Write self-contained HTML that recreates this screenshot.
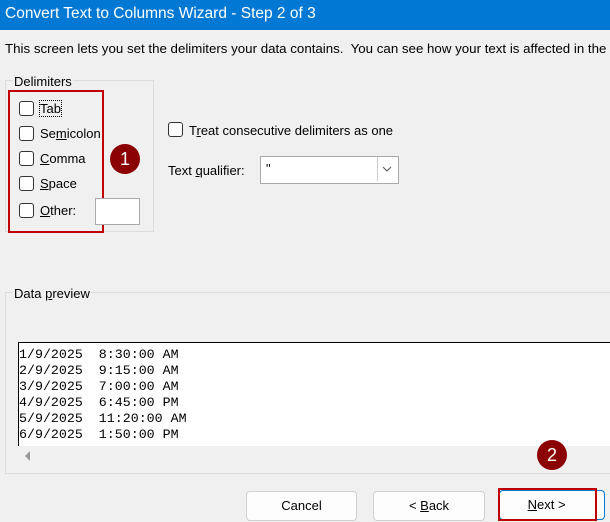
<!DOCTYPE html>
<html><head><style>
html,body{margin:0;width:610px;height:522px;overflow:hidden}
body{background:#f0f0f0;font-family:"Liberation Sans",sans-serif;font-size:13px;color:#000;position:relative}
#w{position:absolute;left:0;top:0;width:610px;height:522px;overflow:hidden}
.a{position:absolute}
.t{position:absolute;white-space:nowrap}
.cb{position:absolute;width:13px;height:13px;border:1px solid #333;border-radius:3px;background:#fff}
u{text-decoration:underline}
.btn{position:absolute;height:28px;border:1px solid #d0d0d0;border-radius:4px;background:#fdfdfd;text-align:center;line-height:28px;font-size:13px}
.circ{position:absolute;border-radius:50%;background:#8b0000;color:#fff;text-align:center;font-size:18px}
.mono{font-family:"Liberation Mono",monospace;font-size:13.3px;line-height:16px}
</style></head><body><div id="w">
<div class="a" style="left:0;top:0;width:610px;height:30px;background:#0078d4"></div>
<div class="t" style="left:5px;top:5px;color:#fff;font-size:15.5px">Convert Text to Columns Wizard - Step 2 of 3</div>
<div class="t" style="left:5px;top:41px;font-size:13.3px">This screen lets you set the delimiters your data contains.&nbsp; You can see how your text is affected in the preview below.</div>

<div class="a" style="left:5px;top:80px;width:147px;height:150px;border:1px solid #dcdcdc"></div>
<div class="t" style="left:13px;top:74px;background:#f0f0f0;padding:0 1px">Delimiters</div>
<div class="a" style="left:8px;top:90px;width:92px;height:139px;border:2px solid #c00000"></div>
<div class="cb" style="left:19px;top:101px"></div><div class="t" style="left:40px;top:101px;outline:1px dotted #000">Tab</div>
<div class="cb" style="left:19px;top:126px"></div><div class="t" style="left:40px;top:126px">Se<u>m</u>icolon</div>
<div class="cb" style="left:19px;top:151px"></div><div class="t" style="left:40px;top:151px"><u>C</u>omma</div>
<div class="cb" style="left:19px;top:176px"></div><div class="t" style="left:40px;top:176px"><u>S</u>pace</div>
<div class="cb" style="left:19px;top:203px"></div><div class="t" style="left:40px;top:203px"><u>O</u>ther:</div>
<div class="a" style="left:95px;top:198px;width:43px;height:25px;border:1px solid #aaa;background:#fff"></div>
<div class="circ" style="left:110px;top:144px;width:30px;height:30px;line-height:30px">1</div>

<div class="cb" style="left:168px;top:122px"></div><div class="t" style="left:189px;top:123px">T<u>r</u>eat consecutive delimiters as one</div>
<div class="t" style="left:168px;top:163px">Text <u>q</u>ualifier:</div>
<div class="a" style="left:260px;top:156px;width:137px;height:26px;border:1px solid #aaa;background:#fff"></div>
<div class="t" style="left:266px;top:161px">"</div>
<div class="a" style="left:377px;top:157px;width:20px;height:24px;border-left:1px solid #ccc;background:#fff"></div>
<svg class="a" style="left:382px;top:165px" width="10" height="8"><path d="M1 2 L5 6 L9 2" fill="none" stroke="#555" stroke-width="1"/></svg>

<div class="a" style="left:5px;top:292px;width:620px;height:180px;border:1px solid #dcdcdc"></div>
<div class="t" style="left:13px;top:286px;background:#f0f0f0;padding:0 1px">Data <u>p</u>review</div>
<div class="a mono" style="left:18px;top:342px;width:600px;height:104px;border-top:1px solid #000;border-left:1px solid #000;background:#fff;padding-top:4px;box-sizing:border-box;white-space:pre">1/9/2025  8:30:00 AM
2/9/2025  9:15:00 AM
3/9/2025  7:00:00 AM
4/9/2025  6:45:00 PM
5/9/2025  11:20:00 AM
6/9/2025  1:50:00 PM</div>
<svg class="a" style="left:24px;top:451px" width="8" height="10"><path d="M6 0 L1 5 L6 10Z" fill="#999"/></svg>
<div class="circ" style="left:537px;top:440px;width:30px;height:30px;line-height:30px">2</div>

<div class="btn" style="left:246px;top:491px;width:109px">Cancel</div>
<div class="btn" style="left:373px;top:491px;width:110px">&lt; <u>B</u>ack</div>
<div class="btn" style="left:499px;top:490px;width:104px;border-color:#0078d4">&nbsp;<u>N</u>ext &gt;&nbsp;&nbsp;&nbsp;&nbsp;</div>
<div class="a" style="left:498px;top:488px;width:95px;height:29px;border:2px solid #c00000"></div>
</div></body></html>
